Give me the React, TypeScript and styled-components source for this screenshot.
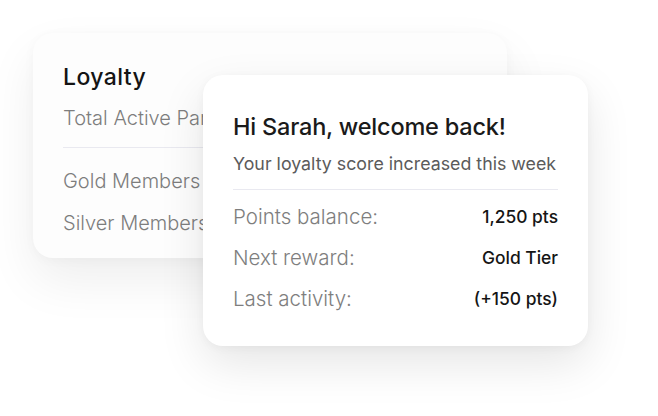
import React from "react";
import styled, { createGlobalStyle } from "styled-components";

const GlobalStyle = createGlobalStyle`
  html, body {
    margin: 0;
    padding: 0;
    background: #ffffff;
  }
  body {
    font-family: Inter, "Noto Sans", sans-serif;
    -webkit-font-smoothing: antialiased;
  }
`;

const Stage = styled.div`
  position: relative;
  width: 658px;
  height: 416px;
  overflow: hidden;
  background: #ffffff;
`;

const Card = styled.div`
  background: #ffffff;
  border-radius: 20px;
  box-sizing: border-box;
`;

const BackCard = styled(Card)`
  margin: 33px 0 0 33px;
  width: 474px;
  height: 225px;
  padding: 31px 30px 0;
  background: #fdfdfd;
  box-shadow: 0 22px 50px rgba(0, 0, 0, 0.07), 0 2px 12px rgba(0, 0, 0, 0.03);
`;

const FrontCard = styled(Card)`
  position: absolute;
  left: 203px;
  top: 75px;
  width: 385px;
  height: 271px;
  padding: 39px 30px 0;
  box-shadow: 0 18px 46px rgba(0, 0, 0, 0.1), 0 2px 10px rgba(0, 0, 0, 0.04);
`;

const BackTitle = styled.div`
  font-weight: 500;
  font-size: 23px;
  line-height: 26px;
  letter-spacing: 0.4px;
  color: #141414;
`;

const BackLine = styled.div<{ $gap: number }>`
  margin-top: ${(p) => p.$gap}px;
  font-size: 20px;
  line-height: 26px;
  font-weight: 300;
  color: #7d7d7d;
  white-space: nowrap;
`;

const Divider = styled.div<{ $top: number }>`
  margin-top: ${(p) => p.$top}px;
  height: 1px;
  background: #e9e9f0;
`;

const Title = styled.div`
  font-size: 23.5px;
  line-height: 26px;
  font-weight: 500;
  color: #1a1a1a;
  letter-spacing: -0.2px;
`;

const Subtitle = styled.div`
  margin-top: 14px;
  font-size: 17.8px;
  line-height: 20px;
  color: #5b5b5b;
`;

const Rows = styled.div`
  margin-top: 6px;
  display: flex;
  flex-direction: column;
`;

const Row = styled.div`
  display: flex;
  align-items: center;
  justify-content: space-between;
  height: 41px;
`;

const Label = styled.span`
  font-size: 20.5px;
  font-weight: 300;
  color: #7e7e7e;
`;

const Value = styled.span`
  font-size: 17.4px;
  font-weight: 500;
  color: #151515;
`;

const rows = [
  { label: "Points balance:", value: "1,250 pts" },
  { label: "Next reward:", value: "Gold Tier" },
  { label: "Last activity:", value: "(+150 pts)" },
];

export default function App() {
  return (
    <Stage>
      <GlobalStyle />
      <BackCard>
        <BackTitle>Loyalty</BackTitle>
        <BackLine $gap={15}>Total Active Participants</BackLine>
        <Divider $top={16} />
        <BackLine $gap={20}>Gold Members</BackLine>
        <BackLine $gap={16}>Silver Members</BackLine>
      </BackCard>
      <FrontCard>
        <Title>Hi Sarah, welcome back!</Title>
        <Subtitle>Your loyalty score increased this week</Subtitle>
        <Divider $top={15} />
        <Rows>
          {rows.map((r) => (
            <Row key={r.label}>
              <Label>{r.label}</Label>
              <Value>{r.value}</Value>
            </Row>
          ))}
        </Rows>
      </FrontCard>
    </Stage>
  );
}
